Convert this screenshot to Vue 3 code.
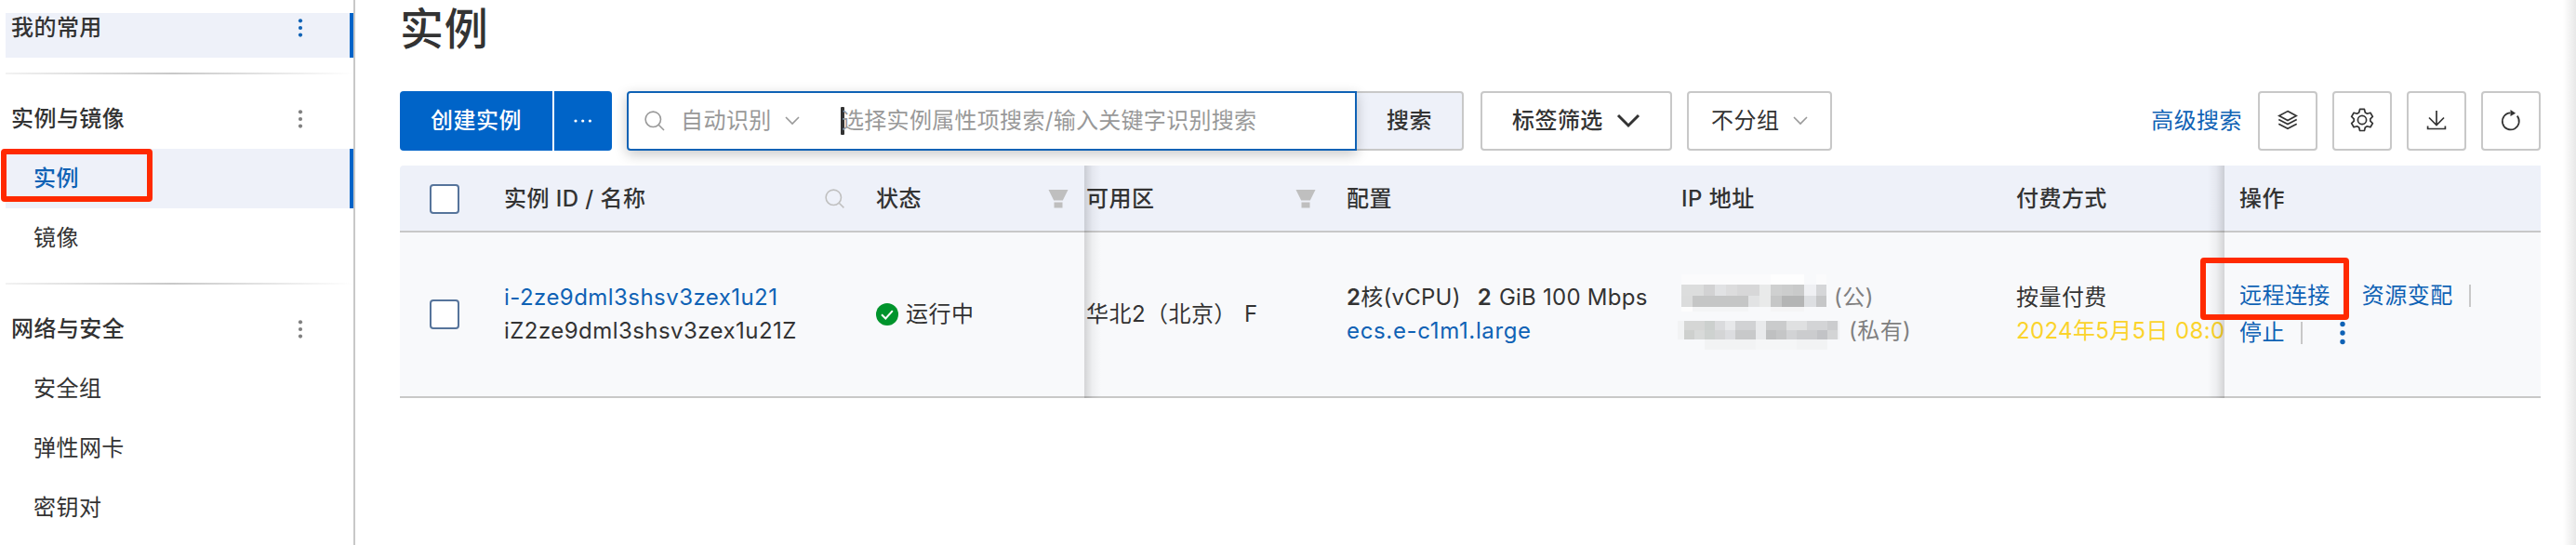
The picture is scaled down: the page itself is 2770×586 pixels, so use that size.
<script setup>
const groups = [
  { title: '实例与镜像', items: [{ name: '实例', active: true }, { name: '镜像' }] },
  { title: '网络与安全', items: [{ name: '安全组' }, { name: '弹性网卡' }, { name: '密钥对' }] },
]
// Greyscale cells of the masked addresses: [x, y, width, height, shade]
const maskA = [
  [0, -11, 96, 11, '#fbfbfc'], [96, -11, 36, 11, '#fefefe'], [145, -11, 11, 11, '#fbfbfc'], [0, 24, 12, 5, '#fdfdfd'], [12, 24, 60, 5, '#f4f5f6'], [96, 24, 36, 5, '#f5f5f6'],
  [0, 0, 24, 12, '#dcdddd'], [24, 0, 12, 12, '#d2d2d3'], [36, 0, 12, 12, '#e1e2e4'], [48, 0, 12, 12, '#dcdcdd'], [60, 0, 24, 12, '#d7d7d8'], [84, 0, 12, 24, '#e9eaea'], [96, 0, 12, 12, '#cfd0d0'], [108, 0, 12, 12, '#cccdcd'], [120, 0, 12, 12, '#c9caca'], [132, 0, 13, 24, '#eff0f3'], [145, 0, 11, 12, '#d5d6d8'],
  [0, 12, 12, 12, '#dbdcdc'], [12, 12, 60, 12, '#c5c6c6'], [72, 12, 12, 12, '#e2e3e4'], [96, 12, 12, 12, '#c6c7c7'], [108, 12, 24, 12, '#b4b5b5'], [132, 12, 13, 12, '#dddfe2'], [145, 12, 11, 12, '#c6c7c8'],
]
const maskB = [
  [-7, 0, 7, 20, '#f2f3f4'], [165, 0, 2, 20, '#f0f1f3'], [22, 20, 55, 11, '#f2f3f4'], [77, 20, 44, 11, '#f5f6f7'], [121, 20, 33, 11, '#f2f3f4'],
  [0, 0, 22, 10, '#d5d6d5'], [22, 0, 11, 10, '#ccd0ce'], [33, 0, 11, 10, '#dadbdd'], [44, 0, 11, 20, '#e7e8ea'], [55, 0, 22, 10, '#d1d2d4'], [77, 0, 11, 20, '#e9eaec'], [88, 0, 22, 10, '#cacbcc'], [110, 0, 22, 10, '#dfe0e1'], [132, 0, 22, 10, '#d3d4d6'], [154, 0, 11, 10, '#cbccce'],
  [0, 10, 11, 10, '#ced0ce'], [11, 10, 11, 10, '#d8dad9'], [22, 10, 11, 10, '#ced2d0'], [33, 10, 11, 10, '#d4d5d6'], [44, 10, 11, 10, '#dcdde0'], [55, 10, 22, 10, '#c8c9ca'], [88, 10, 11, 10, '#bfc0c1'], [99, 10, 11, 10, '#c5c6c7'], [110, 10, 11, 10, '#d2d3d5'], [121, 10, 22, 10, '#cbccce'], [143, 10, 11, 10, '#c2c3c6'], [154, 10, 11, 10, '#d3d4d5'],
]
</script>

<template>
  <div class="page">
    <aside class="side">
      <div class="fav">
        <span class="head">我的常用</span>
        <svg class="dots blue" viewBox="0 0 6 20"><circle cx="3" cy="2.3" r="2.1" /><circle cx="3" cy="10" r="2.1" /><circle cx="3" cy="17.6" r="2.1" /></svg>
      </div>
      <section v-for="g in groups" :key="g.title" class="group">
        <div class="rule"></div>
        <div class="ghead">
          <span class="head">{{ g.title }}</span>
          <svg class="dots" viewBox="0 0 6 20"><circle cx="3" cy="2.3" r="2.1" /><circle cx="3" cy="10" r="2.1" /><circle cx="3" cy="17.6" r="2.1" /></svg>
        </div>
        <div v-for="i in g.items" :key="i.name" class="item" :class="{ active: i.active }">
          {{ i.name }}
          <div v-if="i.active" class="mark mark-nav"></div>
        </div>
      </section>
    </aside>

    <main class="main">
      <h1>实例</h1>
      <div class="toolbar">
        <button class="create">创建实例</button>
        <button class="more"><svg width="20" height="6" viewBox="0 0 20 6"><circle cx="2" cy="3" r="1.6" /><circle cx="9.7" cy="3" r="1.6" /><circle cx="17.4" cy="3" r="1.6" /></svg></button>
        <div class="search">
          <svg class="glass" width="22" height="22" viewBox="0 0 22 22"><circle cx="9.3" cy="9.3" r="8.2" /><path d="M15 15l6 6" /></svg>
          <span class="kind">自动识别</span>
          <svg class="chev" width="16" height="10" viewBox="0 0 16 10"><path d="M1 1l7 7 7-7" /></svg>
          <div class="caret"></div>
          <span class="ph">选择实例属性项搜索/输入关键字识别搜索</span>
        </div>
        <button class="go">搜索</button>
        <button class="tags">标签筛选<svg width="26" height="16" viewBox="0 0 26 16"><path d="M2 2l11 11L24 2" /></svg></button>
        <button class="grp">不分组<svg width="16" height="10" viewBox="0 0 16 10"><path d="M1 1l7 7 7-7" /></svg></button>
        <a class="adv">高级搜索</a>
        <div class="icons">
          <button><svg viewBox="0 0 64 64"><path d="M32 21.600l9.200 5-9.200 5-9.200-5zM22.300 30.600l9.700 5 9.700-5M22.300 35.200l9.700 5 9.700-5" /></svg></button>
          <button><svg viewBox="0 0 64 64"><circle cx="32" cy="31" r="4.600" /><path stroke-linejoin="round" stroke-width="1.900" d="M29.300 19.800h5.400l1 3.900 2.400 1.400 3.800-1.100 2.700 4.600-2.800 2.700v2.600l2.800 2.700-2.700 4.600-3.800-1.100-2.400 1.400-1 3.900h-5.400l-1-3.900-2.400-1.400-3.800 1.100-2.700-4.600 2.800-2.700v-2.600l-2.800-2.700 2.700-4.600 3.800 1.100 2.400-1.400z" transform="translate(3.200 1.650) scale(.9)" /></svg></button>
          <button><svg viewBox="0 0 64 64"><path d="M32 21v16M24 28.500l8 8 8-8M22.600 37.500v3h18.800v-3" /></svg></button>
          <button><svg viewBox="0 0 64 64"><path d="M31.500 23.400a9 9 0 1 0 7.200 3.200" /><path class="solid" d="M31.500 20l5.600 3.700-5.600 3.300z" /></svg></button>
        </div>
      </div>

      <div class="table">
        <div class="row thead">
          <div class="c check"><i class="box"></i></div>
          <div class="c id">实例 ID / 名称<svg class="glass pale" width="22" height="22" viewBox="0 0 22 22"><circle cx="9.3" cy="9.3" r="8.2" /><path d="M15 15l5.4 5.4" /></svg></div>
          <div class="c state">状态<svg class="funnel" width="22" height="22" viewBox="0 0 22 22"><path d="M0.5 1h21l-5.700 11.500h-9.600zM6.500 14.500h9v6h-9z" /></svg></div>
          <div class="c zone">可用区<svg class="funnel" width="22" height="22" viewBox="0 0 22 22"><path d="M0.5 1h21l-5.700 11.500h-9.600zM6.500 14.500h9v6h-9z" /></svg></div>
          <div class="c conf">配置</div>
          <div class="c ip">IP 地址</div>
          <div class="c pay">付费方式</div>
          <div class="c ops">操作</div>
        </div>
        <div class="row tbody">
          <div class="c check"><i class="box"></i></div>
          <div class="c id two"><div class="link">i-2ze9dml3shsv3zex1u21</div><div>iZ2ze9dml3shsv3zex1u21Z</div></div>
          <div class="c state"><svg class="ok" width="24" height="24" viewBox="0 0 24 24"><circle cx="12" cy="12" r="12" /><path d="M6 12.300l4.300 4.200 7.500-8.300" /></svg>运行中</div>
          <div class="c zone"><span class="bj">华北2（北京）</span><span>F</span></div>
          <div class="c conf two"><div class="spec"><b>2</b><span class="cpu">核(vCPU)</span><b>2</b><span class="gib">GiB</span><span>100 Mbps</span></div><div class="link ecs">ecs.e-c1m1.large</div></div>
          <div class="c ip two">
            <div class="addr first"><svg width="156" height="24" shape-rendering="crispEdges"><rect v-for="(r, k) in maskA" :key="k" :x="r[0]" :y="r[1]" :width="r[2]" :height="r[3]" :fill="r[4]" /></svg><span>(公)</span></div>
            <div class="addr second"><svg width="165" height="20" shape-rendering="crispEdges"><rect v-for="(r, k) in maskB" :key="k" :x="r[0]" :y="r[1]" :width="r[2]" :height="r[3]" :fill="r[4]" /></svg><span>(私有)</span></div>
          </div>
          <div class="c pay two"><div>按量付费</div><div class="due">2024年5月5日 08:0</div></div>
          <div class="c ops acts">
            <div class="line"><a>远程连接</a><a class="resize">资源变配</a><i class="sep"></i></div>
            <div class="line"><a>停止</a><i class="sep"></i><svg class="vdots" width="6" height="26" viewBox="0 0 6 26"><circle cx="3" cy="3.500" r="2.700" /><circle cx="3" cy="13" r="2.700" /><circle cx="3" cy="22.500" r="2.700" /></svg></div>
            <div class="mark mark-op"></div>
          </div>
        </div>
        <div class="shade shade-l"></div>
        <div class="shade shade-r"></div>
      </div>
    </main>
    <div class="edge"></div>
  </div>
</template>

<style>
html, body { margin: 0; background: #fff; overflow: hidden; }
</style>

<style scoped>
* { box-sizing: border-box; }
.page { position: relative; display: flex; width: 2770px; height: 586px; overflow: hidden; background: #fff; color: #333; font: 24px/36px Inter, "Noto Sans CJK SC", sans-serif; letter-spacing: .45px; white-space: nowrap; }
button { font: inherit; letter-spacing: inherit; color: inherit; margin: 0; padding: 0; display: flex; align-items: center; background: #fff; border: 2px solid #c8c8c8; border-radius: 4px; height: 64px; flex: none; }
svg { display: block; flex: none; fill: none; }
.side { width: 382px; flex: none; padding: 14px 0 0 6px; border-right: 2px solid #c8c8c8; }
.fav { height: 48px; padding: 0 50px 16px 6px; margin-bottom: 16px; display: flex; align-items: center; justify-content: space-between; background: #eef1f9; border-right: 4px solid #0064c8; }
.ghead { height: 80px; padding: 16px 50px 0 6px; display: flex; align-items: center; justify-content: space-between; border-right: 4px solid transparent; }
.head { font-weight: 500; }
.dots { width: 6px; height: 20px; fill: #808080; }
.dots.blue { fill: #0f62b5; }
.rule { height: 2px; background: linear-gradient(90deg, #f2f2f2, #c8c8c8 48%, #fff); }
.group + .group { padding-top: 16px; }
.item { position: relative; height: 64px; padding-left: 30px; display: flex; align-items: center; border-right: 4px solid transparent; }
.item.active { background: #eef1f9; border-color: #0064c8; color: #0f62b5; font-weight: 500; }
.mark { position: absolute; border: 6px solid #ff2a00; border-radius: 4px; }
.mark-nav { left: -5px; top: 0; width: 163px; height: 57px; }
.main { width: 2302px; margin-left: 48px; flex: none; }
h1 { margin: 0; font-size: 47px; line-height: 62px; height: 98px; font-weight: 500; letter-spacing: .7px; }
.toolbar { display: flex; height: 64px; margin-bottom: 16px; }
.create { width: 164px; justify-content: center; background: #0064c8; border: 0; color: #fff; font-weight: 500; border-radius: 4px 0 0 4px; margin-right: 2px; }
.more { width: 62px; justify-content: center; background: #0064c8; border: 0; border-radius: 0 4px 4px 0; margin-right: 16px; }
.more svg { fill: #fff; }
.search { width: 785px; flex: none; display: flex; align-items: center; border: 2px solid #0f62b5; border-radius: 4px 0 0 4px; padding-left: 17px; box-shadow: 0 4px 14px rgba(0,0,0,.22); color: #999; position: relative; }
.glass { stroke: #999; stroke-width: 1.6; }
.glass.pale { stroke: #c0c0c0; }
.kind { margin-left: 17px; width: 112px; }
.chev { stroke: #999; stroke-width: 1.6; }
.caret { width: 4px; height: 30px; background: #333; border-radius: 1px; margin-left: 44px; }
.ph { margin-left: -3px; letter-spacing: .3px; }
.go { width: 115px; justify-content: center; background: #eef1f9; border-left: 0; border-radius: 0 4px 4px 0; font-weight: 500; margin-right: 18px; }
.tags { width: 206px; padding-left: 32px; font-weight: 500; margin-right: 16px; }
.tags svg { margin-left: 14px; stroke: #333; stroke-width: 3; }
.grp { width: 156px; padding-left: 24px; }
.grp svg { margin-left: 15px; stroke: #999; stroke-width: 1.6; }
.adv { margin-left: auto; line-height: 64px; color: #0f62b5; margin-right: 17px; }
.icons { display: flex; gap: 16px; }
.icons button { width: 64px; }
.icons svg { width: 64px; height: 64px; margin: -2px; stroke: #333; stroke-width: 1.7; }
.icons .solid { fill: #333; stroke: none; }
.table { position: relative; width: 2302px; }
.row { display: grid; grid-template-columns: 112px 400px 226px 280px 360px 360px 224px 340px; border-bottom: 2px solid #c8c8c8; }
.thead { height: 72px; background: #eef1f9; font-weight: 500; border-radius: 4px 0 0 0; }
.tbody { height: 178px; background: #f8f9fb; }
.c { display: flex; align-items: center; min-width: 0; }
.check { padding-left: 32px; }
.box { width: 32px; height: 32px; border: 2px solid #56749b; border-radius: 4px; background: #fff; }
.thead .c { padding-top: 1px; }
.id .pale { margin-left: auto; margin-right: 33px; }
.funnel { fill: #bfbfbf; margin-left: auto; margin-right: 19px; }
.zone .funnel { margin-right: 33px; }
.two { flex-direction: column; align-items: flex-start; justify-content: center; }
.link { color: #0f62b5; }
.ok { fill: #00942c; margin-right: 8px; }
.ok path { fill: none; stroke: #fff; stroke-width: 2; }
.bj { width: 170px; }
.spec { display: flex; letter-spacing: .25px; }
.spec b { font-weight: 600; }
.cpu { margin-right: 18px; }
.gib { margin: 0 7px 0 8px; }
.ecs { letter-spacing: .65px; }
.ip.two { color: #808080; }
.addr { display: flex; align-items: center; height: 36px; }
.addr svg { overflow: visible; }
.addr span { margin-left: 8px; }
.first svg { margin-top: -5px; }
.second { padding-left: 3px; }
.second svg { margin-top: -2px; }
.second span { margin-left: 12px; }
.due { color: #fbd32b; letter-spacing: .35px; }
.ops { padding-left: 16px; }
.acts { position: relative; flex-direction: column; align-items: flex-start; justify-content: center; }
.line { display: flex; align-items: center; height: 40px; color: #0f62b5; }
.resize { margin-left: 34px; }
.sep { width: 2px; height: 24px; background: #c8c8c8; margin-left: 17px; }
.vdots { fill: #0f62b5; margin-left: 40px; }
.mark-op { left: -26px; top: 27px; width: 160px; height: 67px; z-index: 3; }
.shade { position: absolute; top: 0; height: 250px; width: 18px; }
.shade-l { left: 736px; background: linear-gradient(90deg, rgba(0,0,0,.15), rgba(0,0,0,.04) 50%, transparent); }
.shade-r { left: 1944px; background: linear-gradient(270deg, rgba(0,0,0,.15), rgba(0,0,0,.04) 50%, transparent); }
.edge { position: absolute; right: 0; top: 0; width: 14px; height: 586px; background: linear-gradient(90deg, transparent, rgba(0,0,0,.09)); }
</style>
